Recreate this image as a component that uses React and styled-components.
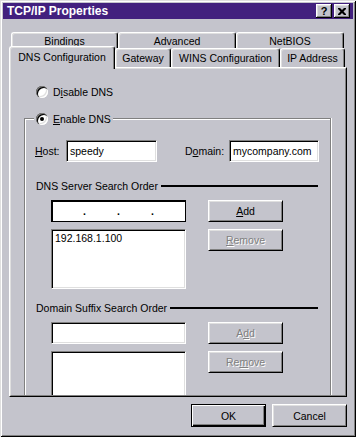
import styled, { createGlobalStyle } from "styled-components";

const GlobalStyle = createGlobalStyle`
  * { box-sizing: border-box; }
  html, body {
    margin: 0;
    padding: 0;
    background: #c4c4cc;
  }
  body {
    font-family: "Liberation Sans", Arial, sans-serif;
    font-size: 10.5px;
    color: #000;
  }
`;

const Window = styled.div`
  width: 356px;
  height: 437px;
  padding: 3px;
  display: flex;
  flex-direction: column;
  background: #c4c4cc;
  box-shadow: inset 1px 1px #dfdfdf, inset -1px -1px #000, inset 2px 2px #fff,
    inset -2px -2px #808080;
`;

const TitleBar = styled.div`
  height: 16px;
  display: flex;
  align-items: center;
  justify-content: space-between;
  padding: 0 3px 0 4px;
  background: #42207e;
`;

const Title = styled.span`
  color: #fff;
  font-weight: bold;
  font-size: 12px;
`;

const Controls = styled.div`
  display: flex;
  gap: 2px;
`;

const CaptionButton = styled.div`
  width: 16px;
  height: 14px;
  display: flex;
  align-items: center;
  justify-content: center;
  background: #c4c4cc;
  font-weight: bold;
  font-size: 11px;
  line-height: 1;
  box-shadow: inset -1px -1px #000, inset 1px 1px #fff, inset -2px -2px #808080,
    inset 2px 2px #dfdfdf;
`;

const Body = styled.div`
  flex: 1;
  display: flex;
  flex-direction: column;
  padding: 13px 6px 0 6px;
`;

const TabRow = styled.div`
  display: flex;
  align-items: flex-end;
  height: ${(p) => p.$h}px;
  padding-left: ${(p) => p.$indent}px;
  position: relative;
  z-index: ${(p) => p.$z};
`;

const Tab = styled.div`
  position: relative;
  z-index: ${(p) => (p.$active ? 2 : 1)};
  width: ${(p) => p.$w}px;
  height: ${(p) => p.$h}px;
  margin-bottom: ${(p) => (p.$active ? -2 : 0)}px;
  padding-bottom: ${(p) => (p.$active ? 2 : 0)}px;
  display: flex;
  align-items: center;
  justify-content: center;
  background: #c4c4cc;
  border-top: 1px solid #fff;
  border-left: 1px solid #fff;
  border-right: 1px solid #000;
  border-radius: 3px 3px 0 0;
  box-shadow: inset -1px 0 #808080, inset 1px 1px #dfdfdf;
  white-space: nowrap;
`;

const Panel = styled.div`
  height: 330px;
  display: flex;
  border: 1px solid;
  border-color: #fff #000 #000 #fff;
`;

const PanelInner = styled.div`
  flex: 1;
  display: flex;
  flex-direction: column;
  overflow: hidden;
  border: 1px solid;
  border-color: #dfdfdf #808080 #808080 #dfdfdf;
  padding: 17px 0 0 0;
`;

const RadioRow = styled.div`
  display: flex;
  align-items: center;
  gap: 5px;
  height: 13px;
  align-self: flex-start;
  margin-left: ${(p) => p.$ml}px;
  margin-top: ${(p) => p.$mt || 0}px;
  padding: 0 2px;
  background: #c4c4cc;
  position: relative;
`;

const Radio = styled.span`
  position: relative;
  width: 12px;
  height: 12px;
  border-radius: 50%;
  background: #fff;
  box-shadow: inset 1px 1px #808080, inset 2px 2px #000, inset -1px -1px #fff,
    inset -2px -2px #dfdfdf;
  &::after {
    content: "";
    display: ${(p) => (p.$checked ? "block" : "none")};
    position: absolute;
    left: 4px;
    top: 4px;
    width: 4px;
    height: 4px;
    border-radius: 50%;
    background: #000;
  }
`;

const GroupBox = styled.div`
  flex: 1;
  display: flex;
  flex-direction: column;
  margin: 20px 14px 0 13px;
  border: 1px solid #808080;
  border-bottom: none;
  box-shadow: inset 1px 1px #fff, 1px 0 #fff;
`;

const FieldRow = styled.div`
  display: flex;
  align-items: center;
  height: 22px;
  margin: 15px 0 0 10px;
`;

const Label = styled.span`
  width: ${(p) => p.$w}px;
  margin-left: ${(p) => p.$ml || 0}px;
`;

const TextBox = styled.div`
  width: ${(p) => p.$w}px;
  height: 22px;
  display: flex;
  align-items: center;
  padding: 0 3px;
  background: #fff;
  border: 1px solid;
  border-color: #808080 #fff #fff #808080;
  box-shadow: inset 1px 1px #000, inset -1px -1px #dfdfdf;
`;

const SectionHeader = styled.div`
  display: flex;
  align-items: center;
  gap: 3px;
  height: 13px;
  margin: ${(p) => p.$mt}px 12px 0 11px;
  &::after {
    content: "";
    flex: 1;
    height: 2px;
    background: #000;
  }
`;

const ListGrid = styled.div`
  display: grid;
  grid-template-columns: 135px 75px;
  grid-template-rows: 22px 60px;
  column-gap: 22px;
  row-gap: 7px;
  margin: 8px 0 0 26px;
`;

const IpBox = styled.div`
  display: grid;
  grid-template-columns: 1fr auto 1fr auto 1fr auto 1fr;
  align-items: center;
  background: #fff;
  border: 1px solid #000;
  box-shadow: inset 1px 1px #000;
  font-weight: bold;
`;

const ListBox = styled.div`
  padding: 2px 3px;
  background: #fff;
  border: 1px solid;
  border-color: #808080 #fff #fff #808080;
  box-shadow: inset 1px 1px #000, inset -1px -1px #dfdfdf;
  line-height: 13px;
`;

const Field = styled(ListBox)`
  padding: 0 3px;
`;

const Button = styled.button`
  width: 75px;
  height: ${(p) => p.$h}px;
  padding: 0;
  align-self: start;
  font: inherit;
  color: ${(p) => (p.disabled ? "#808080" : "#000")};
  text-shadow: ${(p) => (p.disabled ? "1px 1px #fff" : "none")};
  background: #c4c4cc;
  border: 1px solid;
  border-color: #fff #000 #000 #fff;
  box-shadow: inset 1px 1px #dfdfdf, inset -1px -1px #808080;
`;

const DefaultButton = styled(Button)`
  border-color: #000;
  box-shadow: inset 1px 1px #fff, inset -1px -1px #000, inset -2px -2px #808080;
`;

const Footer = styled.div`
  display: flex;
  justify-content: flex-end;
  gap: 6px;
  margin-top: 7px;
`;

const CloseGlyph = () => (
  <svg width="8" height="7" viewBox="0 0 8 7">
    <path
      d="M0 0h2l2 2 2-2h2v1L5.5 3.5 8 6v1H6L4 5 2 7H0V6l2.5-2.5L0 1z"
      fill="#000"
    />
  </svg>
);

const App = () => {
  return (
    <>
      <GlobalStyle />
      <Window>
        <TitleBar>
          <Title>TCP/IP Properties</Title>
          <Controls>
            <CaptionButton>?</CaptionButton>
            <CaptionButton>
              <CloseGlyph />
            </CaptionButton>
          </Controls>
        </TitleBar>

        <Body>
          <TabRow $h={16} $indent={2} $z={1}>
            <Tab $w={107} $h={16}>Bindings</Tab>
            <Tab $w={118} $h={16}>Advanced</Tab>
            <Tab $w={108} $h={16}>NetBIOS</Tab>
          </TabRow>
          <TabRow $h={19} $indent={0} $z={2}>
            <Tab $w={106} $h={23} $active>
              DNS Configuration
            </Tab>
            <Tab $w={56} $h={19}>Gateway</Tab>
            <Tab $w={109} $h={19}>WINS Configuration</Tab>
            <Tab $w={65} $h={19}>IP Address</Tab>
          </TabRow>

          <Panel>
            <PanelInner>
              <RadioRow $ml={23}>
                <Radio />
                <span>
                  D<u>i</u>sable DNS
                </span>
              </RadioRow>

              <GroupBox>
                <RadioRow $ml={9} $mt={-7}>
                  <Radio $checked />
                  <span>
                    <u>E</u>nable DNS
                  </span>
                </RadioRow>

                <FieldRow>
                  <Label $w={31}>
                    <u>H</u>ost:
                  </Label>
                  <TextBox $w={91}>speedy</TextBox>
                  <Label $w={44} $ml={28}>
                    D<u>o</u>main:
                  </Label>
                  <TextBox $w={90}>mycompany.com</TextBox>
                </FieldRow>

                <SectionHeader $mt={17}>DNS Server Search Order</SectionHeader>
                <ListGrid>
                  <IpBox>
                    <span />
                    <span>.</span>
                    <span />
                    <span>.</span>
                    <span />
                    <span>.</span>
                    <span />
                  </IpBox>
                  <Button $h={22}>
                    <u>A</u>dd
                  </Button>
                  <ListBox>192.168.1.100</ListBox>
                  <Button $h={22} disabled>
                    <u>R</u>emove
                  </Button>
                </ListGrid>

                <SectionHeader $mt={12}>Domain Suffix Search Order</SectionHeader>
                <ListGrid>
                  <Field />
                  <Button $h={22} disabled>
                    A<u>d</u>d
                  </Button>
                  <ListBox />
                  <Button $h={22} disabled>
                    Re<u>m</u>ove
                  </Button>
                </ListGrid>
              </GroupBox>
            </PanelInner>
          </Panel>

          <Footer>
            <DefaultButton $h={23}>OK</DefaultButton>
            <Button $h={23}>Cancel</Button>
          </Footer>
        </Body>
      </Window>
    </>
  );
};

export default App;
